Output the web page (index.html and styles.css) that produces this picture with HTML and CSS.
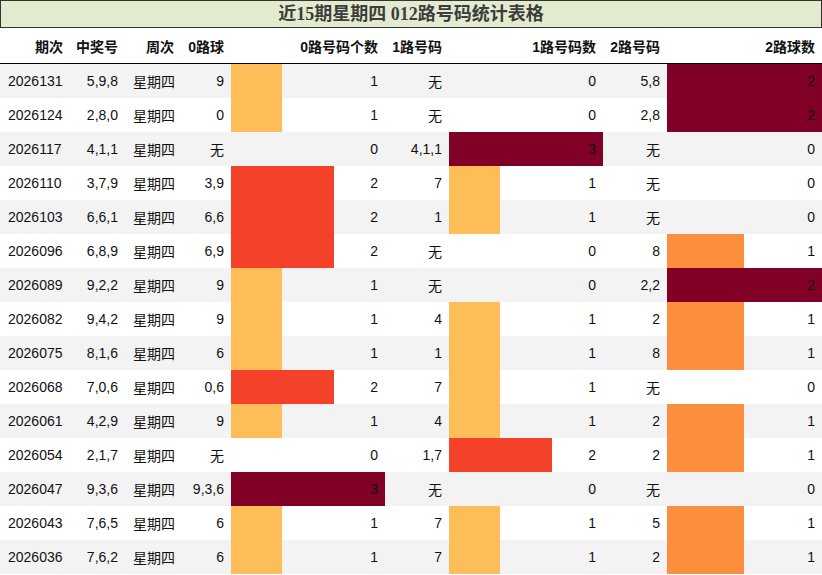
FILE: index.html
```html
<!DOCTYPE html>
<html lang="zh">
<head>
<meta charset="utf-8">
<title>近15期星期四 012路号码统计表格</title>
<link rel="stylesheet" href="styles.css">
</head>
<body>
<div class="title">近15期星期四 012路号码统计表格</div>
<table class="stats">
  <colgroup>
    <col class="c-issue"><col class="c-num"><col class="c-week"><col class="c-r0">
    <col class="c-bar"><col class="c-r1"><col class="c-bar"><col class="c-r2"><col class="c-bar2">
  </colgroup>
  <thead>
    <tr>
      <th>期次</th><th>中奖号</th><th>周次</th><th>0路球</th><th>0路号码个数</th><th>1路号码</th><th>1路号码数</th><th>2路号码</th><th>2路球数</th>
    </tr>
  </thead>
  <tbody>
    <tr><td class="l">2026131</td><td>5,9,8</td><td class="l">星期四</td><td>9</td><td class="bar b-lo" style="--w:33.333%">1</td><td>无</td><td>0</td><td>5,8</td><td class="bar b-max" style="--w:100%">2</td></tr>
    <tr><td class="l">2026124</td><td>2,8,0</td><td class="l">星期四</td><td>0</td><td class="bar b-lo" style="--w:33.333%">1</td><td>无</td><td>0</td><td>2,8</td><td class="bar b-max" style="--w:100%">2</td></tr>
    <tr><td class="l">2026117</td><td>4,1,1</td><td class="l">星期四</td><td>无</td><td>0</td><td>4,1,1</td><td class="bar b-max" style="--w:100%">3</td><td>无</td><td>0</td></tr>
    <tr><td class="l">2026110</td><td>3,7,9</td><td class="l">星期四</td><td>3,9</td><td class="bar b-mid" style="--w:66.667%">2</td><td>7</td><td class="bar b-lo" style="--w:33.333%">1</td><td>无</td><td>0</td></tr>
    <tr><td class="l">2026103</td><td>6,6,1</td><td class="l">星期四</td><td>6,6</td><td class="bar b-mid" style="--w:66.667%">2</td><td>1</td><td class="bar b-lo" style="--w:33.333%">1</td><td>无</td><td>0</td></tr>
    <tr><td class="l">2026096</td><td>6,8,9</td><td class="l">星期四</td><td>6,9</td><td class="bar b-mid" style="--w:66.667%">2</td><td>无</td><td>0</td><td>8</td><td class="bar b-half" style="--w:50%">1</td></tr>
    <tr><td class="l">2026089</td><td>9,2,2</td><td class="l">星期四</td><td>9</td><td class="bar b-lo" style="--w:33.333%">1</td><td>无</td><td>0</td><td>2,2</td><td class="bar b-max" style="--w:100%">2</td></tr>
    <tr><td class="l">2026082</td><td>9,4,2</td><td class="l">星期四</td><td>9</td><td class="bar b-lo" style="--w:33.333%">1</td><td>4</td><td class="bar b-lo" style="--w:33.333%">1</td><td>2</td><td class="bar b-half" style="--w:50%">1</td></tr>
    <tr><td class="l">2026075</td><td>8,1,6</td><td class="l">星期四</td><td>6</td><td class="bar b-lo" style="--w:33.333%">1</td><td>1</td><td class="bar b-lo" style="--w:33.333%">1</td><td>8</td><td class="bar b-half" style="--w:50%">1</td></tr>
    <tr><td class="l">2026068</td><td>7,0,6</td><td class="l">星期四</td><td>0,6</td><td class="bar b-mid" style="--w:66.667%">2</td><td>7</td><td class="bar b-lo" style="--w:33.333%">1</td><td>无</td><td>0</td></tr>
    <tr><td class="l">2026061</td><td>4,2,9</td><td class="l">星期四</td><td>9</td><td class="bar b-lo" style="--w:33.333%">1</td><td>4</td><td class="bar b-lo" style="--w:33.333%">1</td><td>2</td><td class="bar b-half" style="--w:50%">1</td></tr>
    <tr><td class="l">2026054</td><td>2,1,7</td><td class="l">星期四</td><td>无</td><td>0</td><td>1,7</td><td class="bar b-mid" style="--w:66.667%">2</td><td>2</td><td class="bar b-half" style="--w:50%">1</td></tr>
    <tr><td class="l">2026047</td><td>9,3,6</td><td class="l">星期四</td><td>9,3,6</td><td class="bar b-max" style="--w:100%">3</td><td>无</td><td>0</td><td>无</td><td>0</td></tr>
    <tr><td class="l">2026043</td><td>7,6,5</td><td class="l">星期四</td><td>6</td><td class="bar b-lo" style="--w:33.333%">1</td><td>7</td><td class="bar b-lo" style="--w:33.333%">1</td><td>5</td><td class="bar b-half" style="--w:50%">1</td></tr>
    <tr><td class="l">2026036</td><td>7,6,2</td><td class="l">星期四</td><td>6</td><td class="bar b-lo" style="--w:33.333%">1</td><td>7</td><td class="bar b-lo" style="--w:33.333%">1</td><td>2</td><td class="bar b-half" style="--w:50%">1</td></tr>
  </tbody>
</table>
</body>
</html>
```
FILE: styles.css
```css
html, body {
  margin: 0;
  padding: 0;
  background: #ffffff;
}
body {
  width: 822px;
  font-family: "Liberation Sans", "Noto Sans CJK SC", sans-serif;
  font-size: 14px;
  color: #111;
}
.title {
  box-sizing: border-box;
  height: 28px;
  border: 1px solid #333;
  background: #e2ebcd;
  color: #3d3d3d;
  font-family: "Liberation Serif", "Noto Sans CJK SC", serif;
  font-weight: bold;
  font-size: 18px;
  line-height: 26px;
  text-align: center;
}
.stats {
  width: 822px;
  table-layout: fixed;
  border-collapse: collapse;
  border-spacing: 0;
}
.c-issue { width: 70px; }
.c-num { width: 55px; }
.c-week { width: 56px; }
.c-r0 { width: 50px; }
.c-bar { width: 154px; }
.c-r1 { width: 64px; }
.c-r2 { width: 64px; }
.c-bar2 { width: 155px; }
.stats th {
  height: 35px;
  padding: 0 7px 0 0;
  text-align: right;
  font-weight: bold;
  font-size: 14px;
  color: #111;
  border-bottom: 1px solid #000;
  white-space: nowrap;
}
.stats td {
  height: 34px;
  padding: 0 7px 0 0;
  text-align: right;
  white-space: nowrap;
  vertical-align: middle;
}
.stats td.l {
  text-align: left;
  padding: 0 0 0 8px;
}
.stats tbody tr:nth-child(odd) {
  background: #f3f3f3;
}
.stats tbody tr:nth-child(even) {
  background: #ffffff;
}
.bar {
  background-image: linear-gradient(to right, var(--c) 0, var(--c) var(--w), transparent var(--w));
  background-repeat: no-repeat;
}
.b-lo { --c: #fdbe5a; }
.b-mid { --c: #f4412a; }
.b-half { --c: #fd8e3d; }
.b-max { --c: #800026; }
```
